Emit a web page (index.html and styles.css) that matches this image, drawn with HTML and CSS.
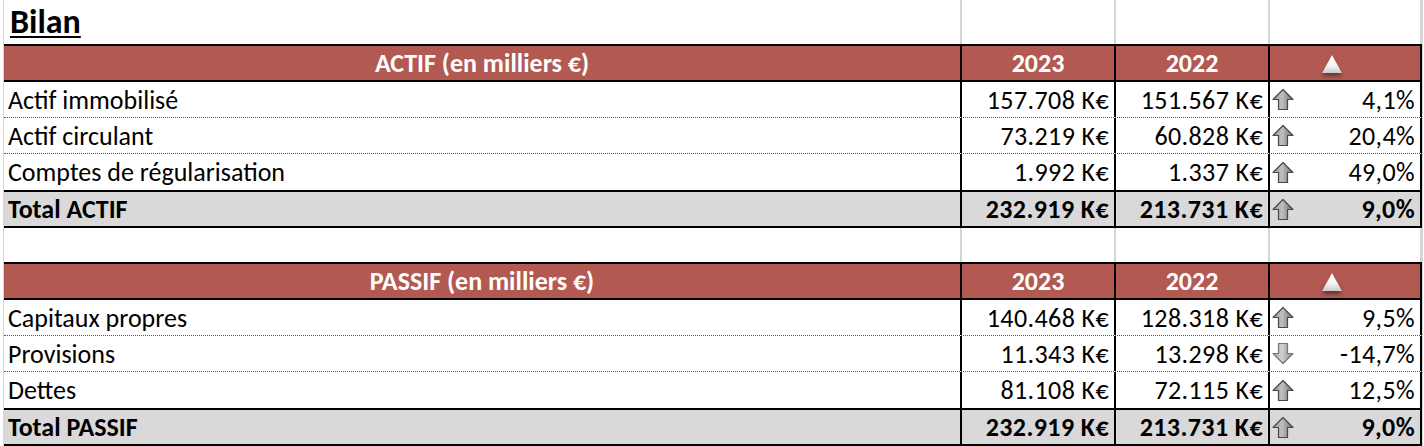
FILE: index.html
```html
<!DOCTYPE html>
<html lang="fr">
<head>
<meta charset="utf-8">
<title>Bilan</title>
<link rel="stylesheet" href="styles.css">
</head>
<body>
<svg class="defs" width="0" height="0" aria-hidden="true">
  <defs>
    <linearGradient id="gUp" x1="0" y1="0" x2="1" y2="0">
      <stop offset="0" stop-color="#959595"/>
      <stop offset="0.45" stop-color="#c0c0c0"/>
      <stop offset="1" stop-color="#696969"/>
    </linearGradient>
    <linearGradient id="gDown" x1="0" y1="0" x2="1" y2="0">
      <stop offset="0" stop-color="#b0b0b0"/>
      <stop offset="0.45" stop-color="#d0d0d0"/>
      <stop offset="1" stop-color="#888888"/>
    </linearGradient>
    <linearGradient id="gTri" x1="0" y1="0" x2="0" y2="1">
      <stop offset="0" stop-color="#ffffff"/>
      <stop offset="0.6" stop-color="#f4f4f4"/>
      <stop offset="1" stop-color="#c9c9c9"/>
    </linearGradient>
    <symbol id="up" viewBox="0 0 22 22">
      <path d="M11 1 L21 11 L15.5 11 L15.5 21 L6.5 21 L6.5 11 L1 11 Z" fill="url(#gUp)" stroke="#4a4a4a" stroke-width="1.2" stroke-linejoin="round"/>
    </symbol>
    <symbol id="down" viewBox="0 0 22 22">
      <path d="M11 21 L21 11 L15.5 11 L15.5 1 L6.5 1 L6.5 11 L1 11 Z" fill="url(#gDown)" stroke="#767676" stroke-width="1.2" stroke-linejoin="round"/>
    </symbol>
  </defs>
</svg>

<div class="sheet">
  <div class="row title-row">
    <div class="cell"><span class="title">Bilan</span></div>
    <div class="cell"></div>
    <div class="cell"></div>
    <div class="cell"></div>
  </div>

  <div class="row head">
    <div class="cell center">ACTIF (en milliers €)</div>
    <div class="cell center">2023</div>
    <div class="cell center">2022</div>
    <div class="cell tri-cell"><svg class="tri" viewBox="0 0 22 20"><polygon points="11,1 21,19 1,19" fill="url(#gTri)"/></svg></div>
  </div>
  <div class="row data dotted">
    <div class="cell">Actif immobilisé</div>
    <div class="cell num">157.708 K€</div>
    <div class="cell num">151.567 K€</div>
    <div class="cell var"><svg class="arrow"><use href="#up"/></svg><span>4,1%</span></div>
  </div>
  <div class="row data dotted">
    <div class="cell">Actif circulant</div>
    <div class="cell num">73.219 K€</div>
    <div class="cell num">60.828 K€</div>
    <div class="cell var"><svg class="arrow"><use href="#up"/></svg><span>20,4%</span></div>
  </div>
  <div class="row data">
    <div class="cell">Comptes de régularisation</div>
    <div class="cell num">1.992 K€</div>
    <div class="cell num">1.337 K€</div>
    <div class="cell var"><svg class="arrow"><use href="#up"/></svg><span>49,0%</span></div>
  </div>
  <div class="row total">
    <div class="cell">Total ACTIF</div>
    <div class="cell num">232.919 K€</div>
    <div class="cell num">213.731 K€</div>
    <div class="cell var"><svg class="arrow"><use href="#up"/></svg><span>9,0%</span></div>
  </div>

  <div class="row blank">
    <div class="cell"></div>
    <div class="cell"></div>
    <div class="cell"></div>
    <div class="cell"></div>
  </div>

  <div class="row head">
    <div class="cell center">PASSIF (en milliers €)</div>
    <div class="cell center">2023</div>
    <div class="cell center">2022</div>
    <div class="cell tri-cell"><svg class="tri" viewBox="0 0 22 20"><polygon points="11,1 21,19 1,19" fill="url(#gTri)"/></svg></div>
  </div>
  <div class="row data dotted">
    <div class="cell">Capitaux propres</div>
    <div class="cell num">140.468 K€</div>
    <div class="cell num">128.318 K€</div>
    <div class="cell var"><svg class="arrow"><use href="#up"/></svg><span>9,5%</span></div>
  </div>
  <div class="row data dotted">
    <div class="cell">Provisions</div>
    <div class="cell num">11.343 K€</div>
    <div class="cell num">13.298 K€</div>
    <div class="cell var"><svg class="arrow"><use href="#down"/></svg><span>-14,7%</span></div>
  </div>
  <div class="row data">
    <div class="cell">Dettes</div>
    <div class="cell num">81.108 K€</div>
    <div class="cell num">72.115 K€</div>
    <div class="cell var"><svg class="arrow"><use href="#up"/></svg><span>12,5%</span></div>
  </div>
  <div class="row total">
    <div class="cell">Total PASSIF</div>
    <div class="cell num">232.919 K€</div>
    <div class="cell num">213.731 K€</div>
    <div class="cell var"><svg class="arrow"><use href="#up"/></svg><span>9,0%</span></div>
  </div>
</div>
</body>
</html>
```

FILE: styles.css
```css
* { box-sizing: border-box; }

html, body {
  margin: 0;
  padding: 0;
  background: #ffffff;
}

body {
  font-family: Carlito, Calibri, Lato, "Liberation Sans", sans-serif;
  font-size: 26px;
  line-height: 1;
  color: #000000;
  overflow: hidden;
}

.defs {
  position: absolute;
  width: 0;
  height: 0;
}

.sheet {
  margin-left: 3px;
  width: 1420px;
  border-left: 1px solid #d6d6d6;
  border-right: 1px solid #d6d6d6;
}

.row {
  display: grid;
  grid-template-columns: 958px 154px 154px 152px;
}

.cell {
  display: flex;
  align-items: center;
  border-right: 2px solid #000000;
  padding: 0 4px;
  white-space: nowrap;
  min-width: 0;
}

/* title row */
.title-row { height: 44px; }
.title-row .cell,
.blank .cell {
  border-right-color: #d6d6d6;
}
.title-row .cell { align-items: flex-start; }
.title {
  font-weight: 700;
  font-size: 34px;
  text-decoration: underline;
  text-decoration-thickness: 2px;
  text-underline-offset: 3px;
  margin-left: 2px;
  margin-top: 5px;
}

/* header */
.head {
  height: 38px;
  border-top: 2px solid #000000;
  border-bottom: 2px solid #000000;
  background: #b25a52;
  color: #ffffff;
  font-weight: 700;
}
.center { justify-content: center; }
.tri-cell {
  justify-content: flex-start;
  padding-left: 51px;
}
.tri {
  width: 22px;
  height: 20px;
  margin-top: 2px;
  filter: drop-shadow(0 3px 2px rgba(0, 0, 0, 0.45));
}

/* data rows */
.data { height: 36px; }
.data.dotted { border-bottom: 1px dotted #555555; }

.num {
  justify-content: flex-end;
  letter-spacing: 0.4px;
  padding-right: 5px;
}

.var {
  justify-content: space-between;
  padding-left: 2px;
  padding-right: 5px;
}
.var span { letter-spacing: 0.4px; }
.arrow {
  width: 22px;
  height: 23px;
  flex: none;
}

/* totals */
.total {
  height: 38px;
  border-top: 2px solid #000000;
  border-bottom: 2px solid #000000;
  background: #d9d9d9;
  font-weight: 700;
}

.blank { height: 34px; }
```
